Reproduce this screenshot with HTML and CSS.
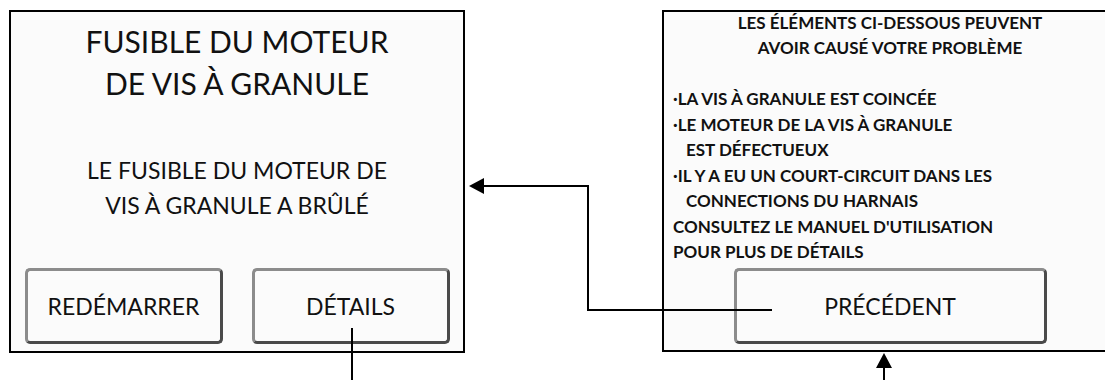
FILE: index.html
```html
<!DOCTYPE html>
<html lang="fr">
<head>
<meta charset="utf-8">
<title>Fusible du moteur de vis à granule</title>
<link rel="stylesheet" href="styles.css">
</head>
<body>
<div class="page">
  <section class="panel panel-left">
    <h1 class="title">FUSIBLE DU MOTEUR<br>DE VIS À GRANULE</h1>
    <p class="message">LE FUSIBLE DU MOTEUR DE<br>VIS À GRANULE A BRÛLÉ</p>
    <div class="actions">
      <div class="btn">REDÉMARRER</div>
      <div class="btn">DÉTAILS</div>
    </div>
  </section>
  <section class="panel panel-right">
    <h2 class="head">LES ÉLÉMENTS CI-DESSOUS PEUVENT<br>AVOIR CAUSÉ VOTRE PROBLÈME</h2>
    <ul class="causes">
      <li>·LA VIS À GRANULE EST COINCÉE</li>
      <li>·LE MOTEUR DE LA VIS À GRANULE</li>
      <li class="indent">EST DÉFECTUEUX</li>
      <li>·IL Y A EU UN COURT-CIRCUIT DANS LES</li>
      <li class="indent">CONNECTIONS DU HARNAIS</li>
      <li>CONSULTEZ LE MANUEL D'UTILISATION</li>
      <li>POUR PLUS DE DÉTAILS</li>
    </ul>
    <div class="actions single">
      <div class="btn btn-wide">PRÉCÉDENT</div>
    </div>
  </section>
  <svg class="connectors" width="1105" height="380" viewBox="0 0 1105 380">
    <line x1="352" y1="328" x2="352" y2="380" stroke="#000" stroke-width="2"/>
    <polyline points="772,310 588,310 588,186 482,186" fill="none" stroke="#000" stroke-width="2"/>
    <polygon points="469,186 484,178 484,194" fill="#000"/>
    <line x1="884" y1="366" x2="884" y2="380" stroke="#000" stroke-width="2"/>
    <polygon points="884,353 876,368 892,368" fill="#000"/>
  </svg>
</div>
</body>
</html>
```
FILE: styles.css
```css
* { box-sizing: border-box; }
html, body {
  margin: 0;
  padding: 0;
  background: #fff;
  overflow: hidden;
}
body {
  font-family: Lato, "Open Sans", sans-serif;
  color: #111;
}
.page {
  position: relative;
  width: 1105px;
  height: 380px;
  display: flex;
  align-items: flex-start;
  padding: 10px 0 0 9px;
  gap: 197px;
}
.panel {
  flex: 0 0 auto;
  width: 456px;
  height: 343px;
  border: 2px solid #000;
  background: #fbfbfb;
  display: flex;
  flex-direction: column;
}
.panel-right {
  height: 342px;
}
.title {
  margin: 8px 0 0;
  font-weight: 400;
  font-size: 30px;
  line-height: 42px;
  text-align: center;
}
.message {
  margin: 49px 0 0;
  font-size: 23px;
  line-height: 35px;
  text-align: center;
}
.actions {
  margin-top: auto;
  display: flex;
  justify-content: center;
  gap: 29px;
  padding-bottom: 7px;
}
.actions.single { padding-bottom: 6px; }
.btn {
  width: 198px;
  height: 76px;
  border: 3px solid;
  border-color: #8c8c8c #4a4a4a #4a4a4a #8c8c8c;
  border-radius: 5px;
  background: #fbfbfb;
  display: flex;
  align-items: center;
  justify-content: center;
  font-size: 23px;
}
.btn-wide { width: 313px; }
.head {
  margin: -2px 0 0;
  font-size: 17px;
  font-weight: 700;
  line-height: 25px;
  text-align: center;
}
.causes {
  list-style: none;
  margin: 26px 0 0;
  padding: 0 0 0 9px;
  font-size: 17px;
  font-weight: 700;
  line-height: 25.5px;
}
.causes .indent { padding-left: 13px; }
.connectors {
  position: absolute;
  left: 0;
  top: 0;
  pointer-events: none;
}
```
